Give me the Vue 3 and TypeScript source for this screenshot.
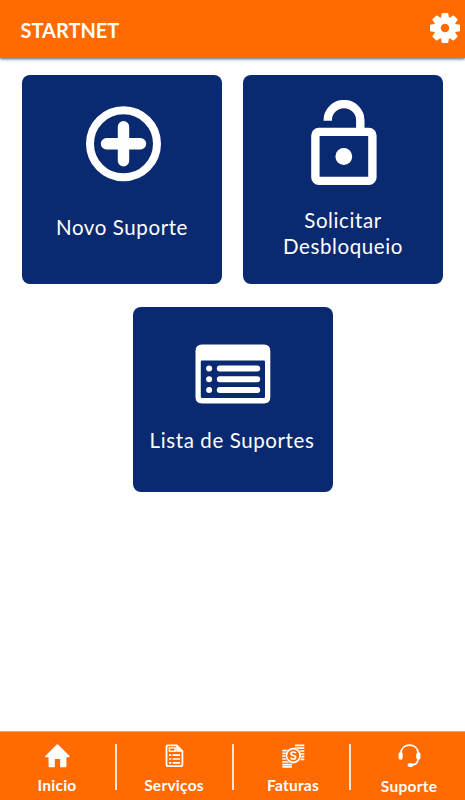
<script setup lang="ts">
interface NavItem {
  id: string
  label: string
}

const navItems: NavItem[] = [
  { id: 'inicio', label: 'Inicio' },
  { id: 'servicos', label: 'Serviços' },
  { id: 'faturas', label: 'Faturas' },
  { id: 'suporte', label: 'Suporte' },
]

const teeth: number[] = [0, 45, 90, 135, 180, 225, 270, 315]
</script>

<template>
  <div class="screen">
    <header class="topbar">
      <h1 class="brand">STARTNET</h1>
      <svg class="gear" viewBox="-15 -15 30 30" aria-label="Configurações">
        <circle r="7.8" fill="none" stroke="#fff" stroke-width="7" />
        <path
          v-for="angle in teeth"
          :key="angle"
          d="M-4-9.5L-3.4-14Q-3.2-15-2.4-15H2.4Q3.2-15 3.4-14L4-9.5Z"
          :transform="`rotate(${angle})`"
          fill="#fff"
        />
      </svg>
    </header>

    <main class="cards">
      <button class="card novo" type="button">
        <svg class="icon" width="76" height="76" viewBox="0 0 76 76">
          <circle cx="37.5" cy="37.8" r="33.5" />
          <path d="M37.5 20.8V54.8M20.5 37.8H54.5" stroke-width="11.4" stroke-linecap="round" />
        </svg>
        <span class="title">Novo Suporte</span>
      </button>

      <button class="card solicitar" type="button">
        <svg class="icon" width="66" height="86" viewBox="0 0 66 86">
          <rect x="4.4" y="31.9" width="57" height="49" rx="3.5" stroke-width="8.4" />
          <path d="M16.7 20.8V20.4A16.3 16.3 0 0 1 49.3 20.4V31" stroke-width="8.4" />
          <circle cx="32.8" cy="56.5" r="8.4" fill="#fff" stroke="none" />
        </svg>
        <span class="title">Solicitar<br />Desbloqueio</span>
      </button>

      <button class="card lista" type="button">
        <svg class="icon" width="76" height="60" viewBox="0 0 76 60">
          <path
            fill="#fff"
            stroke="none"
            fill-rule="evenodd"
            d="M7 .5H69Q75.3.5 75.3 7V53Q75.3 59.5 69 59.5H7Q.5 59.5.5 53V7Q.5.5 7 .5ZM7 16.5Q5.8 16.5 5.8 17.7V52.8Q5.8 54 7 54H69Q70 54 70 52.8V17.7Q70 16.5 69 16.5Z"
          />
          <path d="M24.8 24.6H62.2M24.8 35.3H62.2M24.8 46H62.2" stroke-width="6" stroke-linecap="round" />
          <g fill="#fff" stroke="none">
            <circle cx="14.1" cy="24.6" r="3" />
            <circle cx="14.1" cy="35.3" r="3" />
            <circle cx="14.1" cy="46" r="3" />
          </g>
        </svg>
        <span class="title">Lista de Suportes</span>
      </button>
    </main>

    <nav class="tabs">
      <a v-for="item in navItems" :key="item.id" class="tab" :class="item.id">
        <svg v-if="item.id === 'inicio'" width="25" height="24" viewBox="0 0 25 24">
          <path fill="#fff" d="M12.4.3Q12.8.3 13.3.8L24.6 12Q25 13.1 24 13.2H21.4V22Q21.4 23.2 20.2 23.2H15.2V15H9.8V23.2H4.7Q3.5 23.2 3.5 22V13.2H.9Q-.2 13.1.3 12L11.5.8Q12 .3 12.4.3Z" />
        </svg>
        <svg v-else-if="item.id === 'servicos'" width="19" height="24" viewBox="0 0 19 24">
          <g fill="none" stroke="#fff" stroke-width="1.8">
            <path d="M3.2 1.3H11.9L17.4 7V20.5Q17.4 22.2 15.7 22.2H3.2Q1.5 22.2 1.5 20.5V3Q1.5 1.3 3.2 1.3Z" />
            <path d="M4.4 3.9H10.2V7.2H4.4Z" stroke-width="1.4" />
            <path d="M4 11.1H6.3M7.6 11.1H15M4 15H6.3M7.6 15H15M4 18.8H6.3M7.6 18.8H15" stroke-width="1.7" />
          </g>
          <path d="M11.2 1V7.7H17.8Z" fill="#fff" />
        </svg>
        <svg v-else-if="item.id === 'faturas'" width="23" height="24" viewBox="0 0 23 24">
          <path
            d="M13 1.4H22.3M12 4.2H22.3M18 7H22.3M19 9.8H22.3M18 12.6H22.3M17 15.4H22.3M.3 6.6H6M.3 9.4H5M.3 12.2H5M.3 15H6M.3 17.8H9M.3 20.6H10M.3 22.8H10"
            stroke="#fff"
            stroke-width="1.7"
          />
          <circle cx="11.3" cy="11.6" r="8.2" fill="#ff6b00" />
          <circle cx="11.3" cy="11.6" r="6.9" fill="#ff6b00" stroke="#fff" stroke-width="1.8" />
          <path d="M13.8 9.3Q13.4 8 11.3 8C8.3 8 8.2 11 11.3 11.5C14.6 12 14.3 15.1 11.3 15.1Q9 15.1 8.7 13.5" fill="none" stroke="#fff" stroke-width="1.7" />
        </svg>
        <svg v-else width="23" height="24" viewBox="0 0 23 24">
          <path d="M3 9C3.2 4.1 6.7 1.2 11.5 1.2S19.8 4.1 20 9M20 15.2C19.7 19.2 17.7 21 13 21" fill="none" stroke="#fff" stroke-width="1.7" />
          <rect x=".5" y="8.2" width="4.2" height="7.5" rx="1.9" fill="#fff" />
          <rect x="18.3" y="8.2" width="4.2" height="7.5" rx="1.9" fill="#fff" />
          <ellipse cx="12.5" cy="21" rx="2.9" ry="2" fill="#fff" />
        </svg>
        <span class="label">{{ item.label }}</span>
      </a>
    </nav>
  </div>
</template>

<style>
body {
  margin: 0;
  background: #fff;
}
</style>

<style scoped>
.screen {
  display: flex;
  flex-direction: column;
  width: 465px;
  height: 800px;
  overflow: hidden;
  background: #fff;
  color: #fff;
  font-family: Lato, "Liberation Sans", sans-serif;
}

.topbar {
  display: flex;
  flex: none;
  align-items: center;
  justify-content: space-between;
  box-sizing: border-box;
  height: 58px;
  padding: 0 5.5px 2px 20.5px;
  background: #ff6b00;
  box-shadow: 0 1px 3px rgba(0, 0, 0, 0.65);
}

.brand {
  margin: 4px 0 0;
  font-size: 20px;
  font-weight: 700;
  line-height: 24px;
}

.gear {
  width: 30px;
  height: 30px;
}

.cards {
  display: flex;
  flex: 1;
  flex-wrap: wrap;
  align-content: flex-start;
  justify-content: center;
  gap: 23px 21px;
  padding-top: 17px;
}

.card {
  display: flex;
  flex-direction: column;
  align-items: center;
  box-sizing: border-box;
  width: 200px;
  height: 209px;
  margin: 0;
  padding: 0;
  border: 0;
  border-radius: 8px;
  background: #092a70;
  color: #fff;
  font: inherit;
}

.icon {
  flex: none;
  fill: none;
  stroke: #fff;
  stroke-width: 8;
}

.title {
  font-size: 20.5px;
  line-height: 26px;
  text-align: center;
}

.novo {
  padding: 31px 0 0 3px;
}

.novo .title {
  margin: 32px 3px 0 0;
  letter-spacing: 0.6px;
}

.solicitar {
  padding: 25px 0 0 2px;
}

.solicitar .title {
  margin: 21px 2px 0 0;
  letter-spacing: 0.6px;
}

.lista {
  height: 185px;
  padding-top: 37px;
}

.lista .title {
  margin: 23px 1px 0 0;
  letter-spacing: 0.6px;
}

.tabs {
  display: grid;
  flex: none;
  grid-template-columns: 117px 117px 117px 114px;
  grid-template-rows: 46px;
  box-sizing: border-box;
  height: 69px;
  padding-top: 12px;
  border-top: 1px solid #ff9a62;
  background: #ff6b00;
}

.tab {
  display: flex;
  flex-direction: column;
  align-items: center;
  box-sizing: border-box;
  padding-right: 1px;
  border-right: 2px solid #ffe5d5;
}

.tab:last-child {
  border-right: 0;
}

.tab svg {
  flex: none;
}

.label {
  flex: none;
  margin-top: 7px;
  font-size: 15.5px;
  font-weight: 700;
  line-height: 20px;
  letter-spacing: 0.25px;
  white-space: nowrap;
}

.faturas {
  padding: 0 0 0 3px;
}

.suporte {
  padding-left: 3px;
}

.suporte .label {
  margin-top: 8px;
}
</style>
